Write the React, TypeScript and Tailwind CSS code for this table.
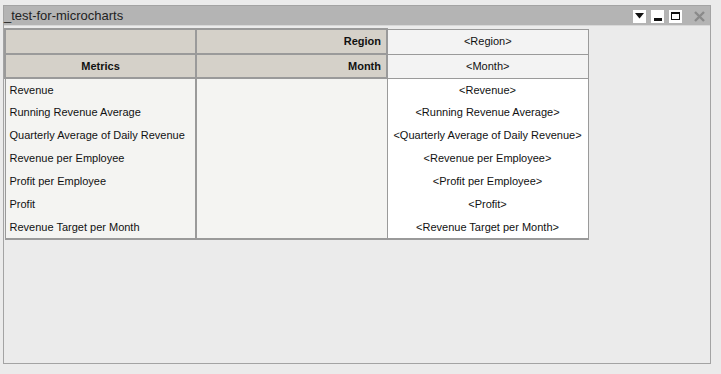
import React from "react";

const metrics = [
  "Revenue",
  "Running Revenue Average",
  "Quarterly Average of Daily Revenue",
  "Revenue per Employee",
  "Profit per Employee",
  "Profit",
  "Revenue Target per Month",
];

const App: React.FC = () => {
  return (
    <div
      className="w-[721px] h-[374px] bg-[#ebebeb] pt-[5px] pl-[3px] text-[#111]"
      style={{ fontFamily: '"Liberation Sans", Arial, sans-serif' }}
    >
      <div className="w-[708px] h-[359px] border border-[#a3a3a3] bg-[#ebebeb]">
        {/* Title bar */}
        <div className="h-[19px] bg-[#b4b4b4] flex items-center justify-between pr-[4px]">
          <span className="text-[13px] leading-none text-[#222]">
            _test-for-microcharts
          </span>
          <div className="flex items-center gap-[5px] pt-[1px]">
            <div className="w-[13px] h-[13px] bg-white flex items-center justify-center">
              <svg width="9" height="6" viewBox="0 0 9 6">
                <path d="M0 0h9L4.5 5.5z" fill="#111" />
              </svg>
            </div>
            <div className="w-[13px] h-[13px] bg-white flex items-end justify-center pb-[2px]">
              <div className="w-[8px] h-[3px] bg-[#111]" />
            </div>
            <div className="w-[13px] h-[13px] bg-white flex items-center justify-center">
              <div className="w-[9px] h-[8px] border border-[#111] border-t-[2px]" />
            </div>
            <div className="w-[13px] h-[13px] ml-[6px] flex items-center justify-center">
              <svg width="11" height="11" viewBox="0 0 11 11">
                <path d="M1 1L10 10M10 1L1 10" stroke="#8a8a8a" strokeWidth="2.4" />
              </svg>
            </div>
          </div>
        </div>
        <div className="h-[3px] border-t border-[#d8d8d8]" />

        {/* Grid */}
        <table className="border-collapse text-[11px] table-fixed">
          <colgroup>
            <col className="w-[191px]" />
            <col className="w-[191px]" />
            <col className="w-[201px]" />
          </colgroup>
          <tbody>
            <tr className="h-[25px]">
              <td className="bg-[#d5d1c9] border-2 border-[#9a9a9a]" />
              <td className="bg-[#d5d1c9] border-2 border-[#9a9a9a] text-right font-bold pr-[5px]">
                Region
              </td>
              <td className="bg-[#f3f3f3] border border-[#9a9a9a] text-center">
                &lt;Region&gt;
              </td>
            </tr>
            <tr className="h-[24px]">
              <td className="bg-[#d5d1c9] border-2 border-[#9a9a9a] text-center font-bold">
                Metrics
              </td>
              <td className="bg-[#d5d1c9] border-2 border-[#9a9a9a] text-right font-bold pr-[5px]">
                Month
              </td>
              <td className="bg-[#f3f3f3] border border-[#9a9a9a] text-center">
                &lt;Month&gt;
              </td>
            </tr>
            {metrics.map((m, i) => (
              <tr key={m} className="h-[23px]">
                <td
                  className={`bg-[#f4f4f2] border-l border-r-2 border-[#9a9a9a] pl-[4px] whitespace-nowrap ${
                    i === metrics.length - 1 ? "border-b-2" : ""
                  }`}
                >
                  {m}
                </td>
                <td
                  className={`bg-[#f4f4f2] border-r border-[#9a9a9a] ${
                    i === metrics.length - 1 ? "border-b-2" : ""
                  }`}
                />
                <td
                  className={`bg-white border-r border-[#9a9a9a] text-center whitespace-nowrap ${
                    i === metrics.length - 1 ? "border-b-2" : ""
                  }`}
                >
                  &lt;{m}&gt;
                </td>
              </tr>
            ))}
          </tbody>
        </table>
      </div>
    </div>
  );
};

export default App;
